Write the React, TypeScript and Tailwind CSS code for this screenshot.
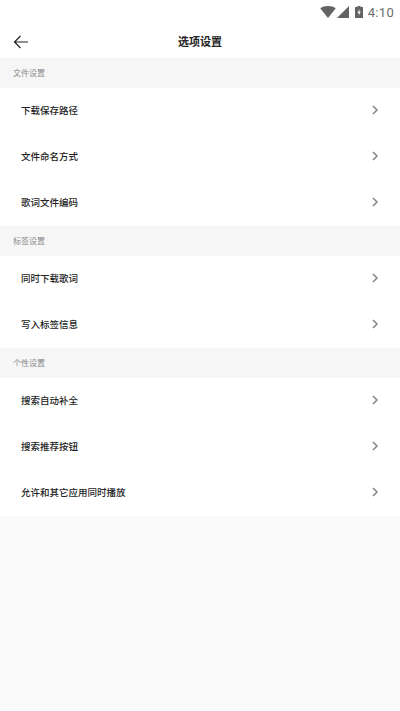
const font = { fontFamily: '"Noto Sans CJK SC", Roboto, sans-serif' };

const sections = [
  { title: "文件设置", rows: ["下载保存路径", "文件命名方式", "歌词文件编码"] },
  { title: "标签设置", rows: ["同时下载歌词", "写入标签信息"] },
  { title: "个性设置", rows: ["搜索自动补全", "搜索推荐按钮", "允许和其它应用同时播放"] },
];

function StatusBar() {
  return (
    <div className="h-6 flex items-center justify-end bg-white pr-[6px]">
      <svg width="16" height="12" viewBox="0 0 16 12">
        <path d="M0.2 2.2C2.4 0.8 5 0 8 0s5.600 0.800 7.800 2.200L8 12z" fill="#636363" />
      </svg>
      <svg width="12" height="12" viewBox="0 0 12 12" className="ml-[1px]">
        <path d="M12 0v12H0z" fill="#636363" />
      </svg>
      <svg width="8" height="12" viewBox="0 0 8 12" className="ml-[6px]">
        <path d="M2.500 0h3v1H8v11H0V1h2.500z" fill="#636363" />
        <path d="M4.500 3 2.500 7h1.300v2.500L5.700 5.800H4.400z" fill="#fff" />
      </svg>
      <span className="ml-[5px] text-[13px] leading-none tracking-[0.3px] text-[#6b6b6b]" style={{ fontFamily: "Roboto, sans-serif" }}>
        4:10
      </span>
    </div>
  );
}

function Row({ label }: { label: string }) {
  return (
    <div className="h-[46px] flex items-center justify-between bg-white pl-[21px] pr-[22px] pb-[2px]">
      <span className="text-[9.500px] text-[#222] font-medium">{label}</span>
      <svg width="6" height="10" viewBox="0 0 6 10" fill="none" stroke="#808080" strokeWidth="1.500">
        <path d="M1 1 5 5 1 9" />
      </svg>
    </div>
  );
}

export default function App() {
  return (
    <div className="w-[400px] h-[711px] overflow-hidden bg-[#fafafa] flex flex-col" style={font}>
      <StatusBar />
      <div className="relative h-[34px] flex items-center justify-center bg-white pt-[1px]">
        <svg width="16" height="14" viewBox="0 0 16 14" fill="none" stroke="#222" strokeWidth="1.200" className="absolute left-[13px] top-[11px]">
          <path d="M15 7H1.500M7.500 1 1.500 7l6 6" />
        </svg>
        <span className="text-[11px] font-bold text-[#222]">选项设置</span>
      </div>
      {sections.map((section) => (
        <div key={section.title}>
          <div className="h-[30px] flex items-center bg-[#f6f6f6] pl-[13px] pb-[1px] text-[8px] text-[#8a8a8a]">
            {section.title}
          </div>
          {section.rows.map((row) => (
            <Row key={row} label={row} />
          ))}
        </div>
      ))}
    </div>
  );
}
